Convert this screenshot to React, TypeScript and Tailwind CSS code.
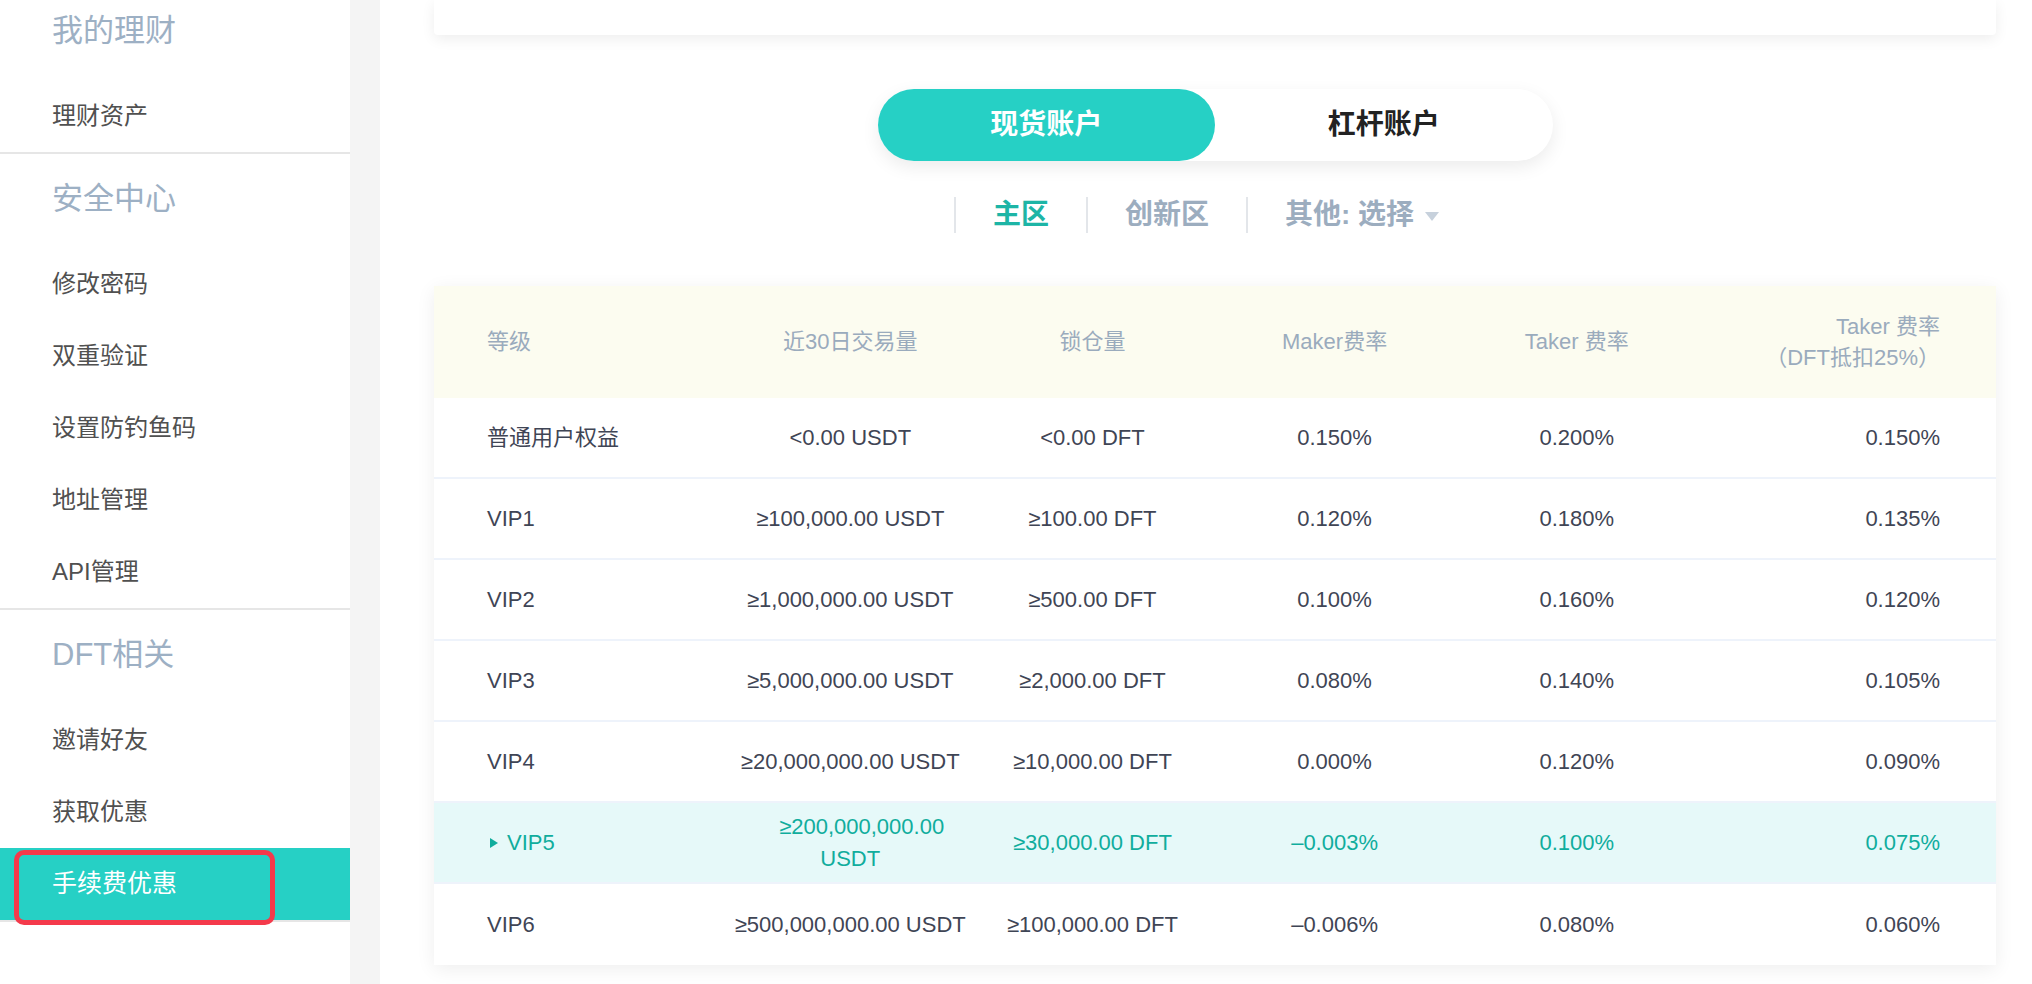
import React from "react";

const FONT = { fontFamily: '"Liberation Sans", "Noto Sans CJK SC", sans-serif' };

type Row = { level: string; vol: string; lock: string; maker: string; taker: string; dft: string; active?: boolean };

const rows: Row[] = [
  { level: "普通用户权益", vol: "<0.00 USDT", lock: "<0.00 DFT", maker: "0.150%", taker: "0.200%", dft: "0.150%" },
  { level: "VIP1", vol: "≥100,000.00 USDT", lock: "≥100.00 DFT", maker: "0.120%", taker: "0.180%", dft: "0.135%" },
  { level: "VIP2", vol: "≥1,000,000.00 USDT", lock: "≥500.00 DFT", maker: "0.100%", taker: "0.160%", dft: "0.120%" },
  { level: "VIP3", vol: "≥5,000,000.00 USDT", lock: "≥2,000.00 DFT", maker: "0.080%", taker: "0.140%", dft: "0.105%" },
  { level: "VIP4", vol: "≥20,000,000.00 USDT", lock: "≥10,000.00 DFT", maker: "0.000%", taker: "0.120%", dft: "0.090%" },
  { level: "VIP5", vol: "≥200,000,000.00 USDT", lock: "≥30,000.00 DFT", maker: "–0.003%", taker: "0.100%", dft: "0.075%", active: true },
  { level: "VIP6", vol: "≥500,000,000.00 USDT", lock: "≥100,000.00 DFT", maker: "–0.006%", taker: "0.080%", dft: "0.060%" },
];

function SectionHeader({ children }: { children: React.ReactNode }) {
  return (
    <div className="h-[94px] flex items-center pl-[52px] pb-[4px] text-[31px] text-[#9db0c4]">{children}</div>
  );
}

function Item({ children }: { children: React.ReactNode }) {
  return <div className="h-[72px] flex items-center pl-[52px] text-[24px] text-[#505050]">{children}</div>;
}

function Divider() {
  return <div className="h-[2px] bg-[#e6e6e6]" />;
}

export default function App() {
  return (
    <div className="w-[2032px] h-[984px] flex overflow-hidden bg-white" style={FONT}>
      {/* Sidebar */}
      <div className="w-[350px] shrink-0 bg-white flex flex-col">
        <div className="-mt-[14px]">
          <SectionHeader>我的理财</SectionHeader>
          <Item>理财资产</Item>
        </div>
        <Divider />
        <SectionHeader>安全中心</SectionHeader>
        <Item>修改密码</Item>
        <Item>双重验证</Item>
        <Item>设置防钓鱼码</Item>
        <Item>地址管理</Item>
        <Item>API管理</Item>
        <Divider />
        <SectionHeader>DFT相关</SectionHeader>
        <Item>邀请好友</Item>
        <Item>获取优惠</Item>
        <div className="relative h-[72px] flex items-center pl-[52px] text-[25px] text-white bg-[#26d0c5]">
          手续费优惠
          <div className="absolute left-[14px] top-[2px] w-[261px] h-[75px] border-[5px] border-[#f43a4b] rounded-[10px]" />
        </div>
        <Divider />
      </div>

      {/* Gray strip */}
      <div className="w-[30px] shrink-0 bg-[#f4f4f4]" />

      {/* Main */}
      <div className="flex-1 flex flex-col pl-[54px] pr-[36px]">
        <div className="h-[35px] bg-white rounded-b-[4px] shadow-[0_4px_14px_rgba(0,0,0,0.07)]" />

        {/* Toggle */}
        <div className="mt-[54px] self-center w-[675px] h-[72px] rounded-full bg-white shadow-[0_6px_18px_rgba(0,0,0,0.08)] flex">
          <div className="w-1/2 h-full rounded-full bg-[#26d0c5] flex items-center justify-center text-[28px] font-bold text-white">
            现货账户
          </div>
          <div className="w-1/2 h-full flex items-center justify-center text-[28px] font-bold text-[#222222]">
            杠杆账户
          </div>
        </div>

        {/* Tabs */}
        <div className="mt-[36px] self-center h-[36px] flex items-center text-[28px] font-bold">
          <div className="h-full flex items-center px-[37px] border-l-2 border-[#e3e6ea] text-[#1db5a6]">主区</div>
          <div className="h-full flex items-center px-[37px] border-l-2 border-[#e3e6ea] text-[#9cadbf]">创新区</div>
          <div className="h-full flex items-center px-[37px] border-l-2 border-[#e3e6ea] text-[#9cadbf]">
            其他: 选择
            <svg width="14" height="10" viewBox="0 0 14 10" className="ml-[11px] mt-[4px]">
              <path d="M0 0 L14 0 L7 9 Z" fill="#c7d1dc" />
            </svg>
          </div>
        </div>

        {/* Table */}
        <div className="mt-[53px] bg-white shadow-[0_4px_18px_rgba(0,0,0,0.07)] flex flex-col text-[22px] leading-[32px]">
          <div className="h-[112px] bg-[#fcfcf0] grid grid-cols-6 items-center pl-[53px] pr-[56px] text-[#9aabbd]">
            <div>等级</div>
            <div className="text-center">近30日交易量</div>
            <div className="text-center">锁仓量</div>
            <div className="text-center">Maker费率</div>
            <div className="text-center">Taker 费率</div>
            <div className="text-right leading-[31px]">
              <div>Taker 费率</div>
              <div>（DFT抵扣25%）</div>
            </div>
          </div>
          {rows.map((r, i) => (
            <div
              key={r.level}
              className={
                "h-[81px] grid grid-cols-6 items-center pl-[53px] pr-[56px] " +
                (i < rows.length - 1 ? "border-b-2 border-[#eef3fb] " : "") +
                (r.active ? "bg-[#e6f9f9] text-[#10ad9d]" : "text-[#3f4555]")
              }
            >
              <div className="flex items-center">
                {r.active && (
                  <svg width="8" height="10" viewBox="0 0 8 10" className="mr-[9px] ml-[3px]">
                    <path d="M0 0 L8 5 L0 10 Z" fill="#10ad9d" />
                  </svg>
                )}
                {r.level}
              </div>
              <div className={"text-center " + (r.active ? "px-[50px]" : "")}>{r.vol}</div>
              <div className="text-center">{r.lock}</div>
              <div className="text-center">{r.maker}</div>
              <div className="text-center">{r.taker}</div>
              <div className="text-right">{r.dft}</div>
            </div>
          ))}
        </div>
      </div>
    </div>
  );
}
